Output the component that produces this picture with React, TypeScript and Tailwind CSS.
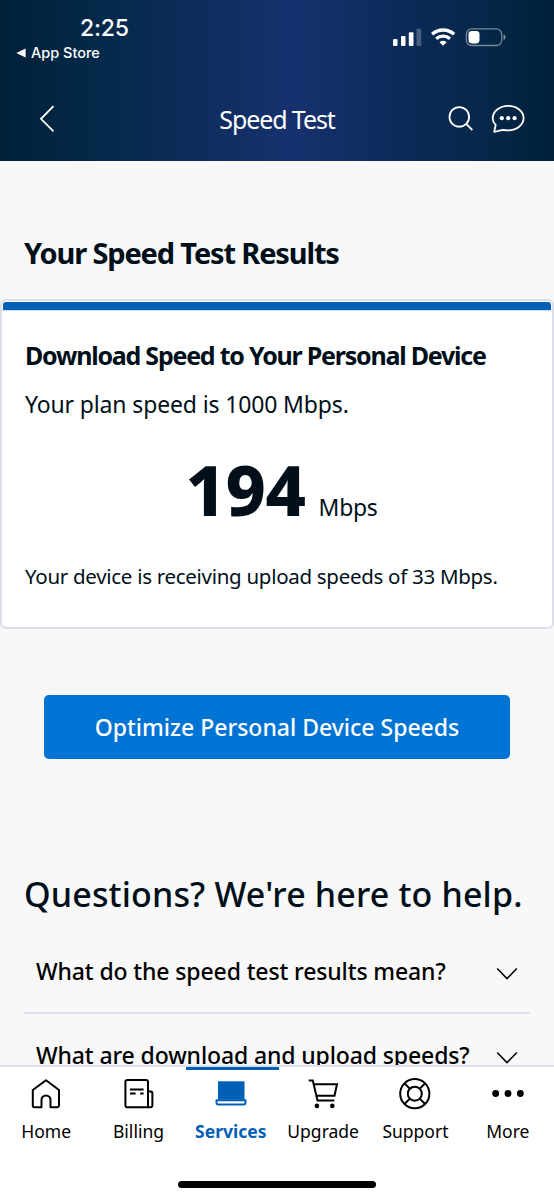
import type { ReactNode } from "react";
import clsx from "clsx";

const questions = [
  "What do the speed test results mean?",
  "What are download and upload speeds?",
];

function StatusBar() {
  return (
    <div className="flex h-[70px] justify-between font-[Inter,sans-serif] text-white">
      <div className="flex flex-col pl-4">
        <div className="mt-3 ml-16 h-8 text-[23px] leading-8 font-medium tracking-[-0.2px]">2:25</div>
        <div className="flex h-[18px] items-center text-[14.5px] leading-[18px] font-medium">
          <svg className="mr-[5px]" width="10" height="10" viewBox="0 0 10 10" fill="currentColor">
            <path d="M0.3 5 9.6 0.6v8.8z" />
          </svg>
          App Store
        </div>
      </div>
      <svg className="mt-6 mr-12" width="114" height="26" viewBox="0 0 114 26" fill="currentColor">
        <rect x="1" y="15" width="4.5" height="7" rx="1" />
        <rect x="9" y="12" width="4.5" height="10" rx="1" />
        <rect x="16.8" y="8.3" width="4.7" height="13.7" rx="1" />
        <rect x="24.5" y="4.7" width="4.7" height="17.3" rx="1" opacity="0.25" />
        <g fill="none" stroke="currentColor" strokeWidth="3.3">
          <path d="M40.1 10.2a16.5 16.5 0 0 1 22 0" />
          <path d="M44.2 14.8a10.4 10.4 0 0 1 13.8 0" />
        </g>
        <path d="M47.5 18.2a5.8 5.8 0 0 1 7.2 0L51.1 21.8z" />
        <rect x="74.4" y="4.9" width="35.3" height="16.6" rx="5.2" fill="none" stroke="currentColor" strokeWidth="1.3" opacity="0.45" />
        <rect x="76.5" y="7" width="11" height="12.4" rx="3.3" />
        <path d="M111.5 10.5c2.8 1 2.8 4.4 0 5.4z" opacity="0.5" />
      </svg>
    </div>
  );
}

function Header() {
  return (
    <header className="h-[161px] shrink-0 bg-[linear-gradient(90deg,#002038_0%,#04294a_18%,#0e2d5c_36%,#16316e_52%,#142f69_58%,#0a2a56_75%,#052748_88%,#002038_100%)]">
      <StatusBar />
      <div className="grid h-[98px] grid-cols-3 items-center text-white">
        <svg className="ml-[39px]" width="16" height="28" viewBox="0 0 16 28" fill="none" stroke="currentColor" strokeWidth="1.8">
          <path d="M14.5 1.2 2 13.8l12.5 12.6" />
        </svg>
        <h1 className="text-center text-[25px] leading-10 font-normal tracking-[-1.1px] whitespace-nowrap">Speed Test</h1>
        <div className="flex items-center justify-end gap-[17px] pr-[29px]">
          <svg width="26" height="28" viewBox="0 0 26 28" fill="none" stroke="currentColor" strokeWidth="1.8">
            <circle cx="11.3" cy="11.9" r="9.8" />
            <path d="m18.2 18.9 6.2 6.3" />
          </svg>
          <svg width="34" height="30" viewBox="0 0 34 30" fill="none" stroke="currentColor" strokeWidth="1.8">
            <path d="M3.2 27.8 4.7 20.9C2.6 18.9 1.7 16.7 1.7 14.5 1.7 7.3 8.6 1.9 17.2 1.9s15.4 5.4 15.4 12.2-6.8 12.3-15.4 12.3c-1.9 0-3.7-.1-5.3-.5Z" strokeLinejoin="round" />
            <g fill="currentColor" stroke="none">
              <circle cx="10.8" cy="14.2" r="2.1" />
              <circle cx="17.2" cy="14.2" r="2.1" />
              <circle cx="23.6" cy="14.2" r="2.1" />
            </g>
          </svg>
        </div>
      </div>
    </header>
  );
}

function ResultsCard() {
  return (
    <section className="mt-[26px] h-[330px] rounded-md border-2 border-[#dcdfe9] bg-white whitespace-nowrap">
      <div className="mx-px mt-px h-2 rounded-t-[3px] bg-[#0060b5]" />
      <div className="h-px bg-[#dcdfe9]" />
      <div className="px-[23px] pt-6">
        <h3 className="text-[25px] leading-10 font-bold tracking-[-1.23px]">Download Speed to Your Personal Device</h3>
        <p className="mt-[9px] text-[23px] leading-10 tracking-[-0.14px]">Your plan speed is 1000 Mbps.</p>
        <div className="mt-[25px] flex h-20 items-baseline justify-center gap-[13px] pl-[9px]">
          <span className="text-[70px] leading-20 font-extrabold tracking-[-0.4px]">194</span>
          <span className="text-[23px] tracking-[-0.3px]">Mbps</span>
        </div>
        <p className="mt-8 text-[20.5px] leading-[30px] tracking-[-0.29px]">Your device is receiving upload speeds of 33 Mbps.</p>
      </div>
    </section>
  );
}

function Question({ text }: { text: string }) {
  return (
    <div className="flex h-[84px] items-center justify-between border-b-2 border-[#dcdfed] px-3 text-black">
      <span className="text-[23px] leading-10 font-medium tracking-[-0.12px] whitespace-nowrap">{text}</span>
      <svg className="mt-1.5" width="22" height="14" viewBox="0 0 22 14" fill="none" stroke="currentColor" strokeWidth="1.5">
        <path d="M1.2 1.5 11 11.6l9.8-10.1" />
      </svg>
    </div>
  );
}

function NavItem({ label, active, children }: { label: string; active?: boolean; children: ReactNode }) {
  return (
    <div className={clsx("relative flex flex-1 flex-col items-center", active ? "text-[#0060b5]" : "text-black")}>
      {active && <div className="absolute top-0 left-[1.3px] h-[3px] w-[93px] bg-[#0060b5]" />}
      <svg className="mt-[9px]" width="36" height="36" viewBox="0 0 36 36" fill="none" stroke="currentColor" strokeWidth="2" strokeLinejoin="round">
        {children}
      </svg>
      <span className={clsx("mt-[7px] text-[17.5px] leading-6", active && "font-bold")}>{label}</span>
    </div>
  );
}

function BottomNav() {
  return (
    <nav className="h-[135px] shrink-0 border-t-2 border-[#dcdfed] bg-white">
      <div className="flex h-[114px]">
        <NavItem label="Home">
          <path d="M18 4.2 31 14v15.5a1.8 1.8 0 0 1-1.8 1.8h-6.7V24a4.5 4.5 0 0 0-9 0v7.3H6.6a1.8 1.8 0 0 1-1.8-1.8V14Z" />
        </NavItem>
        <NavItem label="Billing">
          <path d="M5.4 5.8A1.8 1.8 0 0 1 7.2 4h19a1.8 1.8 0 0 1 1.8 1.8v25.4H7.2a1.8 1.8 0 0 1-1.8-1.8Z" />
          <path d="M28 15.6h2.6a1.8 1.8 0 0 1 1.8 1.8v12a1.8 1.8 0 0 1-1.8 1.8H28" />
          <path d="M10 13.4h13.6M10 17.6h5.6M20.2 17.6h3.4" />
        </NavItem>
        <NavItem label="Services" active>
          <path d="M5 5.3h26.5v18.4H5z" fill="currentColor" stroke="none" />
          <path d="M3.5 24.2h29v2.4a2 2 0 0 1-2 2h-25a2 2 0 0 1-2-2Z" />
        </NavItem>
        <NavItem label="Upgrade">
          <path d="M3.7 4.4h4.1l4.7 20h16.8M8.9 8.2h23.1l-2.5 11.6H11.5" strokeLinejoin="miter" />
          <circle cx="11.9" cy="29.9" r="2.3" fill="currentColor" stroke="none" />
          <circle cx="27.3" cy="29.9" r="2.3" fill="currentColor" stroke="none" />
        </NavItem>
        <NavItem label="Support">
          <circle cx="17.8" cy="17.7" r="14.6" />
          <circle cx="17.8" cy="17.7" r="7" />
          <path d="m7.5 7.4 5.4 5.4M28.1 7.4l-5.4 5.4M7.5 28l5.4-5.4M28.1 28l-5.4-5.4" />
        </NavItem>
        <NavItem label="More">
          <g fill="currentColor" stroke="none">
            <circle cx="5.7" cy="17.5" r="3.4" />
            <circle cx="18" cy="17.5" r="3.4" />
            <circle cx="30.3" cy="17.5" r="3.4" />
          </g>
        </NavItem>
      </div>
      <div className="mx-auto h-[7px] w-[198px] rounded-full bg-black" />
    </nav>
  );
}

export default function App() {
  return (
    <div className="flex h-[1200px] w-[554px] flex-col overflow-hidden bg-[#f8f8f8] font-['Noto_Sans',sans-serif] text-[#000f19]">
      <Header />
      <main className="min-h-0 flex-1 overflow-hidden">
        <h2 className="mt-[72px] pl-6 text-[29px] leading-10 font-bold tracking-[-1.15px] whitespace-nowrap">Your Speed Test Results</h2>
        <ResultsCard />
        <button className="mx-11 mt-[66px] block h-16 w-[466px] rounded-[5px] bg-[#0074d4] text-[23px] font-medium whitespace-nowrap text-white">
          Optimize Personal Device Speeds
        </button>
        <div className="mx-6 pt-[110px]">
          <h2 className="text-[34px] leading-[50px] font-medium tracking-[0.14px] whitespace-nowrap">Questions? We're here to help.</h2>
          <div className="mt-[11px]">
            {questions.map((q) => (
              <Question key={q} text={q} />
            ))}
          </div>
        </div>
      </main>
      <BottomNav />
    </div>
  );
}
